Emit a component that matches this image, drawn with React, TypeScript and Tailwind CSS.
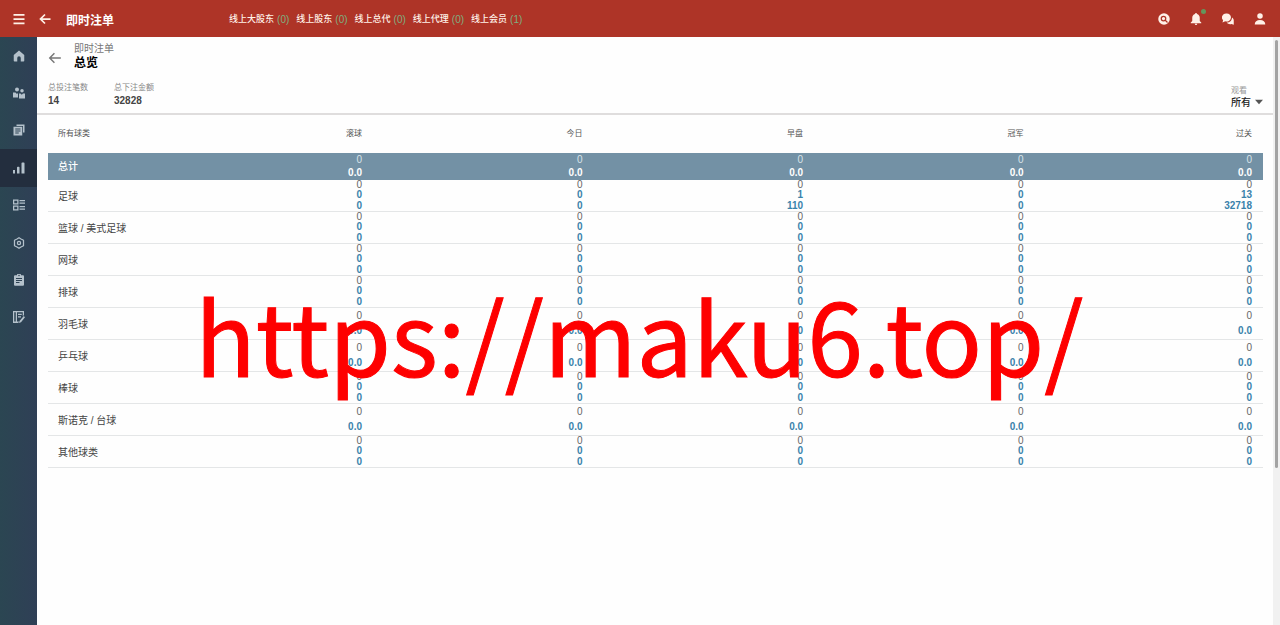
import { useState, type ReactNode } from "react";
import { clsx } from "clsx";

type IconProps = {
  children: ReactNode;
  className?: string;
};

function Icon({ children, className }: IconProps) {
  return (
    <svg
      viewBox="0 0 24 24"
      fill="currentColor"
      aria-hidden="true"
      className={clsx("shrink-0", className ?? "size-3")}
    >
      {children}
    </svg>
  );
}

const menuItems = [
  {
    label: "首页",
    icon: (
      <path d="M12 1 1.5 10v11.5a1.5 1.5 0 0 0 1.5 1.5h5.5v-7a3.5 3.5 0 0 1 7 0v7H21a1.5 1.5 0 0 0 1.5-1.5V10z" />
    ),
  },
  {
    label: "账号",
    icon: (
      <>
        <circle cx="8" cy="5" r="4" />
        <circle cx="18" cy="7.5" r="3.5" />
        <path d="M0 11h5l3 3 2-2v9H0zM12 13h3l2.500 2.500L20 13h4v10H12z" />
      </>
    ),
  },
  {
    label: "报表",
    icon: (
      <>
        <path d="M7 1h16v16h-3V4H7z" />
        <path
          fillRule="evenodd"
          d="M1 5.500h17.500V23H1zM4.500 9v1.800H15V9zm0 4v1.800H15V13zm0 4v1.800h7V17z"
        />
      </>
    ),
  },
  {
    label: "即时注单",
    icon: (
      <path d="M0 16h4v7H0zM8 11a1.500 1.500 0 0 1 1.500-1.500h2A1.500 1.500 0 0 1 13 11v12H8zM17 2.500A1.500 1.500 0 0 1 18.500 1h3A1.500 1.500 0 0 1 23 2.500V23h-6z" />
    ),
  },
  {
    label: "赛果",
    icon: (
      <path
        fillRule="evenodd"
        d="M0 1h11v10H0zm2.500 2.500v5h6v-5zM0 13h11v10H0zm2.500 2.500v5h6v-5zM13 2h11v2.500H13zm0 5h11v2.500H13zm0 7h11v2.500H13zm0 5h11v2.500H13z"
      />
    ),
  },
  {
    label: "设置",
    icon: (
      <g fill="none" stroke="currentColor" strokeWidth="2.500" strokeLinejoin="round">
        <path d="M12 1.500 16 4l5 2.500V17.500L16 20l-4 2.500L8 20l-5-2.500V6.500L8 4z" />
        <circle cx="12" cy="12" r="3.200" />
      </g>
    ),
  },
  {
    label: "公告",
    icon: (
      <path
        fillRule="evenodd"
        d="M4 2.500h4a4 4 0 0 1 8 0h4A2 2 0 0 1 22 4.500v17a2 2 0 0 1-2 2H4a2 2 0 0 1-2-2v-17a2 2 0 0 1 2-2zM12 1.500a1.500 1.500 0 1 0 0 3 1.500 1.500 0 0 0 0-3zM6 8v2h12V8zm0 4v2h12v-2zm0 4v2h7v-2z"
      />
    ),
  },
  {
    label: "日志",
    icon: (
      <>
        <path
          fillRule="evenodd"
          d="M0 0h22v8l-2.500 2.500v-8H8V21h4l-1.500 3H0zm2.500 2.500V21h3V2.500z"
        />
        <path d="M10 5.500h7.500v2.500H10zm0 5h6V13h-6zM21.500 10l2.500 2.500L16 22.500 12 24l1-4z" />
      </>
    ),
  },
];

const onlineCounts = [
  { label: "线上大股东", count: 0 },
  { label: "线上股东", count: 0 },
  { label: "线上总代", count: 0 },
  { label: "线上代理", count: 0 },
  { label: "线上会员", count: 1 },
];

const columns = ["滚球", "今日", "早盘", "冠军", "过关"];

const zeros = ["0", "0", "0"];
const zeroAmount = ["0", "0.0"];

const rows = [
  {
    name: "足球",
    cells: [zeros, zeros, ["0", "1", "110"], zeros, ["0", "13", "32718"]],
  },
  { name: "篮球 / 美式足球", cells: columns.map(() => zeros) },
  { name: "网球", cells: columns.map(() => zeros) },
  { name: "排球", cells: columns.map(() => zeros) },
  { name: "羽毛球", cells: columns.map(() => zeroAmount) },
  { name: "乒乓球", cells: columns.map(() => zeroAmount) },
  { name: "棒球", cells: columns.map(() => zeros) },
  { name: "斯诺克 / 台球", cells: columns.map(() => zeroAmount) },
  { name: "其他球类", cells: columns.map(() => zeros) },
];

function TopBar() {
  return (
    <header className="flex h-[37px] shrink-0 items-center bg-[#ae3427] text-[#fff1e8]">
      <button type="button" aria-label="菜单" className="flex w-[37px] justify-center">
        <Icon>
          <path d="M1 2h22v3.500H1zm0 8.500h22V14H1zM1 19h22v3.500H1z" />
        </Icon>
      </button>
      <button type="button" aria-label="返回" className="flex w-4 justify-center">
        <Icon>
          <path
            d="M12 3 3 12l9 9M3 12h20"
            fill="none"
            stroke="currentColor"
            strokeWidth="3.500"
          />
        </Icon>
      </button>
      <h1 className="ml-[13px] pt-1 text-xs leading-4 font-bold text-white">即时注单</h1>

      <nav className="ml-[115px] flex flex-1 gap-[7px] pt-[2px] whitespace-nowrap">
        {onlineCounts.map((item) => (
          <a key={item.label} href="#" className="flex items-center gap-[3px] text-[9px] font-medium">
            {item.label}
            <span className="text-[10px] font-normal text-[#7fae80]">({item.count})</span>
          </a>
        ))}
      </nav>

      <div className="flex items-center gap-5 pr-[14px]">
        <button type="button" aria-label="搜索">
          <Icon>
            <circle cx="12" cy="12" r="11.500" />
            <g fill="none" stroke="#ae3427" strokeWidth="2.500">
              <circle cx="11" cy="11" r="4.500" />
              <path d="m14 14 5 5" />
            </g>
          </Icon>
        </button>
        <button type="button" aria-label="通知" className="relative">
          <Icon>
            <path d="M12 0a2 2 0 0 1 2 2c3.500 1 5.500 4 5.500 7.500V16l3 3v1.500h-21V19l3-3V9.500C4.500 6 6.500 3 10 2a2 2 0 0 1 2-2zM9.500 21.500h5a2.500 2.500 0 0 1-5 0z" />
          </Icon>
          <span className="absolute -top-1 -right-1 size-[5px] rounded-full bg-[#64965c]" />
        </button>
        <button type="button" aria-label="消息">
          <Icon>
            <path d="M9 1a8.500 8 0 1 1-2.500 15.500L1 19l1.200-4.500A8.500 8 0 0 1 9 1z" />
            <path d="M20 9c2 1.500 3.500 3.500 3.500 6v8.500L19 22c-4 1-7.500 0-9.500-3 6 0 10.500-4 10.500-10z" />
          </Icon>
        </button>
        <button type="button" aria-label="个人">
          <Icon>
            <circle cx="12" cy="6" r="5.500" />
            <path d="M1.500 23c0-6 4-9 10.500-9s10.500 3 10.500 9z" />
          </Icon>
        </button>
      </div>
    </header>
  );
}

function SideMenu() {
  return (
    <aside className="w-[37px] shrink-0 bg-linear-to-r from-[#2b4652] to-[#2f3f56]">
      <nav className="flex h-[299px] flex-col text-[#b4c1cb]">
        {menuItems.map((item) => (
          <a
            key={item.label}
            href="#"
            aria-label={item.label}
            className={clsx(
              "flex flex-1 items-center justify-center",
              item.label === "即时注单" && "bg-[#232e3e]",
            )}
          >
            <Icon>{item.icon}</Icon>
          </a>
        ))}
      </nav>
    </aside>
  );
}

function Summary() {
  const [view, setView] = useState("all");

  return (
    <section className="flex h-[78px] justify-between border-b-2 border-[#dfdddd] pr-[10px] pl-[11px]">
      <div>
        <div className="flex items-center pt-[5px]">
          <button type="button" aria-label="返回总览" className="mr-3 pt-1 text-[#777]">
            <Icon className="size-[14px]">
              <path
                d="M11 4 3 12l8 8M3 12h19"
                fill="none"
                stroke="currentColor"
                strokeWidth="2.500"
              />
            </Icon>
          </button>
          <div>
            <p className="text-[10px] leading-[14px] text-[#777]">即时注单</p>
            <h2 className="text-xs leading-[14px] font-bold text-black">总览</h2>
          </div>
        </div>
        <dl className="mt-3 flex gap-[26px]">
          <div>
            <dt className="text-[8px] leading-3 text-[#888]">总投注笔数</dt>
            <dd className="text-[10px] leading-[14px] font-bold text-[#444]">14</dd>
          </div>
          <div>
            <dt className="text-[8px] leading-3 text-[#888]">总下注金额</dt>
            <dd className="text-[10px] leading-[14px] font-bold text-[#444]">32828</dd>
          </div>
        </dl>
      </div>

      <div className="flex flex-col justify-end pb-1">
        <label htmlFor="view" className="text-[8px] leading-3 text-[#999]">
          观看
        </label>
        <div className="flex items-center gap-1">
          <select
            id="view"
            value={view}
            onChange={(event) => setView(event.target.value)}
            className="appearance-none text-[10px] leading-3 font-medium text-[#222]"
          >
            <option value="all">所有</option>
          </select>
          <Icon className="size-2 text-[#555]">
            <path d="M0 2h24L12 16z" />
          </Icon>
        </div>
      </div>
    </section>
  );
}

type ValueCellProps = {
  values: string[];
  total?: boolean;
};

function ValueCell({ values, total }: ValueCellProps) {
  return (
    <td className="p-0">
      <div
        className={clsx(
          "flex flex-col pr-[11px] text-right text-[10px] leading-none",
          total ? "h-[27px]" : "h-8 border-b border-[#e4e6e7]",
        )}
      >
        {values.map((value, index) => (
          <span
            key={index}
            className={clsx(
              "flex flex-1 items-center justify-end",
              index > 0 && "font-bold",
              total && (index > 0 ? "text-white" : "text-[#d8e3e9]"),
              !total && (index > 0 ? "text-[#3a82ab]" : "text-[#666]"),
            )}
          >
            {value}
          </span>
        ))}
      </div>
    </td>
  );
}

function BetTable() {
  return (
    <div className="pr-[10px] pl-[11px]">
      <table className="w-full table-fixed border-collapse">
        <colgroup>
          <col className="w-[8.6%]" />
          <col className="w-[18.15%]" />
          <col className="w-[18.15%]" />
          <col className="w-[18.15%]" />
          <col className="w-[18.15%]" />
          <col />
        </colgroup>
        <thead>
          <tr className="h-[38px] text-[8px] text-[#555]">
            <th scope="col" className="p-0 pl-[10px] text-left font-normal">
              所有球类
            </th>
            {columns.map((column) => (
              <th key={column} scope="col" className="p-0 pr-[11px] text-right font-normal">
                {column}
              </th>
            ))}
          </tr>
        </thead>
        <tbody>
          <tr className="bg-[#7391a5]">
            <th scope="row" className="p-0 pl-[10px] text-left text-[10px] font-medium text-white">
              总计
            </th>
            {columns.map((column) => (
              <ValueCell key={column} values={zeroAmount} total />
            ))}
          </tr>
          {rows.map((row) => (
            <tr key={row.name}>
              <th scope="row" className="p-0">
                <div className="flex h-8 items-center border-b border-[#e4e6e7] pt-[2px] pl-[10px] text-[10px] font-normal whitespace-nowrap text-[#444]">
                  {row.name}
                </div>
              </th>
              {row.cells.map((values, index) => (
                <ValueCell key={columns[index]} values={values} />
              ))}
            </tr>
          ))}
        </tbody>
      </table>
    </div>
  );
}

export default function App() {
  return (
    <div
      lang="zh-CN"
      className="relative flex min-h-screen flex-col overflow-hidden bg-[#fefefe] font-['Liberation_Sans','Noto_Sans_CJK_SC',sans-serif]"
    >
      <TopBar />
      <div className="flex flex-1">
        <SideMenu />
        <main className="min-w-0 flex-1">
          <Summary />
          <BetTable />
        </main>
        <div className="w-[7px] bg-[#f1f1f1] px-[2px] pt-[3px]">
          <div className="h-[428px] rounded-full bg-[#a3a3a3]" />
        </div>
      </div>
      <p className="pointer-events-none absolute top-[284px] left-[195px] font-['Noto_Sans_CJK_SC',sans-serif] text-[100px] leading-none whitespace-nowrap text-[#fe0000] [-webkit-text-stroke:1px_#fe0000]">
        https://maku6.top/
      </p>
    </div>
  );
}
